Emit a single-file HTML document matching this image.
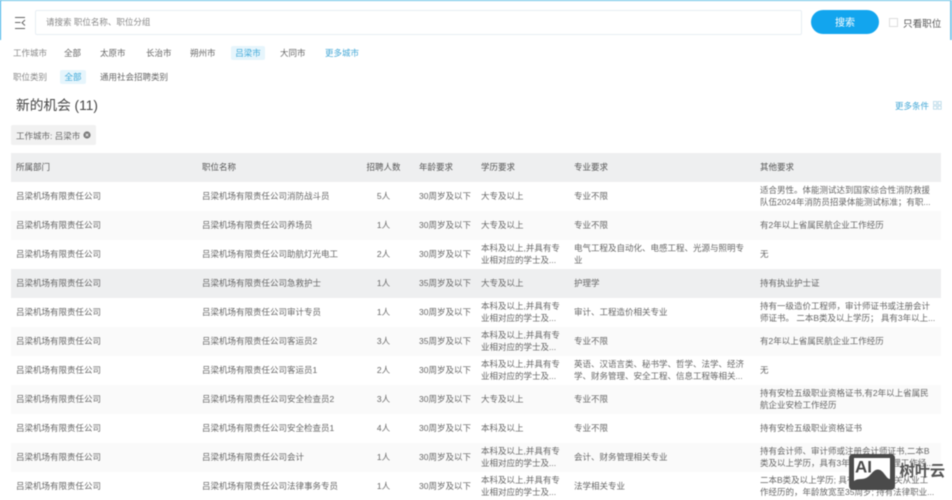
<!DOCTYPE html>
<html lang="zh-CN">
<head>
<meta charset="utf-8">
<title>新的机会</title>
<style>
html,body{margin:0;padding:0;background:#fff}
body{width:952px;height:500px;overflow:hidden;position:relative;font-family:"Liberation Sans","Noto Sans CJK SC",sans-serif;font-size:8.5px;color:#666}
#p{position:absolute;left:0;top:0;width:952px;height:500px;overflow:hidden;filter:blur(.45px)}
.a{position:absolute;white-space:nowrap}
.f{line-height:14px;height:14px}
.chip{background:#e6f5fc;color:#3fa9d8;text-align:center;border-radius:2px}
.row{position:absolute;left:11px;width:930px;height:29px}
.row.s{background:#fafafa}
.row.h{background:#eeeff0}
.row.t{background:#eeeff0;color:#555;height:29px}
.row div{position:absolute;top:0;height:29px;display:flex;align-items:center;white-space:nowrap;line-height:12px}
.c1{left:5px}.c2{left:191px}.c3{left:347px;width:51px;justify-content:center}.c4{left:408px}.c5{left:470px}.c6{left:563px}.c7{left:749px}
</style>
</head>
<body>
<div id="p">
<div class="a" style="left:0;top:0;width:952px;height:1px;background:#6cc3e6"></div>
<div class="a" style="left:0;top:0;width:1px;height:40px;background:#35aee6"></div>
<div class="a" style="left:950px;top:0;width:1.5px;height:40px;background:#7cc6e8"></div>

<svg class="a" style="left:14px;top:16px" width="12" height="14" viewBox="0 0 12 14" fill="none" stroke="#666" stroke-width="1">
<path d="M1 1.500H11M1 6.500H6.500M1 12.500H11M11 4L8 6.800L11 9.500"/>
</svg>

<div class="a" style="left:35px;top:10px;width:765px;height:23px;border:1px solid #e8eef4;border-radius:2px;line-height:23px;text-indent:10px;color:#888">请搜索 职位名称、职位分组</div>
<div class="a" style="left:811px;top:10px;width:68px;height:24px;border-radius:12px;background:#12a5ee"></div>
<div class="a" style="left:811px;top:12px;width:68px;height:24px;color:#fff;text-align:center;line-height:24px;font-size:10px">搜索</div>
<div class="a" style="left:889px;top:18px;width:7px;height:7px;border:1px solid #ddd"></div>
<div class="a" style="left:903px;top:17.500px;line-height:14px;font-size:9.6px;color:#555">只看职位</div>

<div class="a f" style="left:13px;top:46px;color:#888">工作城市</div>
<div class="a f" style="left:64px;top:46px">全部</div>
<div class="a f" style="left:100px;top:46px">太原市</div>
<div class="a f" style="left:146px;top:46px">长治市</div>
<div class="a f" style="left:190px;top:46px">朔州市</div>
<div class="a f chip" style="left:231px;top:46px;width:34px">吕梁市</div>
<div class="a f" style="left:280px;top:46px">大同市</div>
<div class="a f" style="left:325px;top:46px;color:#45a8d6">更多城市</div>

<div class="a f" style="left:13px;top:70px;color:#888">职位类别</div>
<div class="a f chip" style="left:60px;top:70px;width:26px">全部</div>
<div class="a f" style="left:100px;top:70px">通用社会招聘类别</div>

<div class="a" style="left:16px;top:97px;font-size:13.7px;line-height:18px;color:#444">新的机会 (11)</div>
<div class="a" style="left:895px;top:98.500px;line-height:14px;color:#45a8d6">更多条件</div>
<svg class="a" style="left:933px;top:100.500px" width="9" height="9" viewBox="0 0 9 9" fill="none" stroke="#b5d6e6" stroke-width=".8">
<rect x=".5" y=".5" width="3.200" height="3.200"/><rect x="5" y=".5" width="3.200" height="3.200"/><rect x=".5" y="5" width="3.200" height="3.200"/><rect x="5" y="5" width="3.200" height="3.200"/>
</svg>

<div class="a" style="left:11px;top:125px;width:85px;height:20px;background:#f1f1f1;border-radius:2px"></div>
<div class="a" style="left:16px;top:128.500px;line-height:14px;color:#666">工作城市: 吕梁市</div>
<svg class="a" style="left:83px;top:131px" width="8" height="8" viewBox="0 0 8 8">
<circle cx="4" cy="4" r="3.600" fill="#7b7b7b"/><path d="M2.700 2.700L5.300 5.300M5.300 2.700L2.700 5.300" stroke="#f1f1f1" stroke-width=".8"/>
</svg>

<div class="row t" style="top:152.500px">
<div class="c1">所属部门</div><div class="c2">职位名称</div><div class="c3">招聘人数</div><div class="c4">年龄要求</div><div class="c5">学历要求</div><div class="c6">专业要求</div><div class="c7">其他要求</div>
</div>

<div class="row" style="top:181.500px">
<div class="c1">吕梁机场有限责任公司</div><div class="c2">吕梁机场有限责任公司消防战斗员</div><div class="c3">5人</div><div class="c4">30周岁及以下</div><div class="c5">大专及以上</div><div class="c6">专业不限</div><div class="c7"><span>适合男性。体能测试达到国家综合性消防救援<br>队伍2024年消防员招录体能测试标准；有职...</span></div>
</div>
<div class="row s" style="top:210.500px">
<div class="c1">吕梁机场有限责任公司</div><div class="c2">吕梁机场有限责任公司养场员</div><div class="c3">1人</div><div class="c4">30周岁及以下</div><div class="c5">大专及以上</div><div class="c6">专业不限</div><div class="c7">有2年以上省属民航企业工作经历</div>
</div>
<div class="row" style="top:239.500px">
<div class="c1">吕梁机场有限责任公司</div><div class="c2">吕梁机场有限责任公司助航灯光电工</div><div class="c3">2人</div><div class="c4">30周岁及以下</div><div class="c5"><span>本科及以上,并具有专<br>业相对应的学士及...</span></div><div class="c6"><span>电气工程及自动化、电感工程、光源与照明专<br>业</span></div><div class="c7">无</div>
</div>
<div class="row h" style="top:268.500px">
<div class="c1">吕梁机场有限责任公司</div><div class="c2">吕梁机场有限责任公司急救护士</div><div class="c3">1人</div><div class="c4">35周岁及以下</div><div class="c5">大专及以上</div><div class="c6">护理学</div><div class="c7">持有执业护士证</div>
</div>
<div class="row" style="top:297.500px">
<div class="c1">吕梁机场有限责任公司</div><div class="c2">吕梁机场有限责任公司审计专员</div><div class="c3">1人</div><div class="c4">30周岁及以下</div><div class="c5"><span>本科及以上,并具有专<br>业相对应的学士及...</span></div><div class="c6">审计、工程造价相关专业</div><div class="c7"><span>持有一级造价工程师，审计师证书或注册会计<br>师证书。 二本B类及以上学历； 具有3年以上...</span></div>
</div>
<div class="row s" style="top:326.500px">
<div class="c1">吕梁机场有限责任公司</div><div class="c2">吕梁机场有限责任公司客运员2</div><div class="c3">3人</div><div class="c4">35周岁及以下</div><div class="c5"><span>本科及以上,并具有专<br>业相对应的学士及...</span></div><div class="c6">专业不限</div><div class="c7">有2年以上省属民航企业工作经历</div>
</div>
<div class="row" style="top:355.500px">
<div class="c1">吕梁机场有限责任公司</div><div class="c2">吕梁机场有限责任公司客运员1</div><div class="c3">2人</div><div class="c4">30周岁及以下</div><div class="c5"><span>本科及以上,并具有专<br>业相对应的学士及...</span></div><div class="c6"><span>英语、汉语言类、秘书学、哲学、法学、经济<br>学、财务管理、安全工程、信息工程等相关...</span></div><div class="c7">无</div>
</div>
<div class="row s" style="top:384.500px">
<div class="c1">吕梁机场有限责任公司</div><div class="c2">吕梁机场有限责任公司安全检查员2</div><div class="c3">3人</div><div class="c4">30周岁及以下</div><div class="c5">大专及以上</div><div class="c6">专业不限</div><div class="c7"><span>持有安检五级职业资格证书,有2年以上省属民<br>航企业安检工作经历</span></div>
</div>
<div class="row" style="top:413.500px">
<div class="c1">吕梁机场有限责任公司</div><div class="c2">吕梁机场有限责任公司安全检查员1</div><div class="c3">4人</div><div class="c4">30周岁及以下</div><div class="c5">本科及以上</div><div class="c6">专业不限</div><div class="c7">持有安检五级职业资格证书</div>
</div>
<div class="row s" style="top:442.500px">
<div class="c1">吕梁机场有限责任公司</div><div class="c2">吕梁机场有限责任公司会计</div><div class="c3">1人</div><div class="c4">30周岁及以下</div><div class="c5"><span>本科及以上,并具有专<br>业相对应的学士及...</span></div><div class="c6">会计、财务管理相关专业</div><div class="c7"><span>持有会计师、审计师或注册会计师证书,二本B<br>类及以上学历，具有3年以上财务管理工作经...</span></div>
</div>
<div class="row" style="top:471.500px">
<div class="c1">吕梁机场有限责任公司</div><div class="c2">吕梁机场有限责任公司法律事务专员</div><div class="c3">1人</div><div class="c4">30周岁及以下</div><div class="c5"><span>本科及以上,并具有专<br>业相对应的学士及...</span></div><div class="c6">法学相关专业</div><div class="c7"><span>二本B类及以上学历; 具有3年以上相关从业工<br>作经历的，年龄放宽至35周岁; 持有法律职业...</span></div>
</div>

<svg class="a" style="left:849px;top:453px" width="47" height="38" viewBox="0 0 47 38">
<rect x="0" y="1" width="46" height="36" rx="4" fill="#4a4a4a"/>
<path d="M5 5H41V26C37 26 35 17 29 16.500C24 16.500 22 23 17 25C12 27 9 25 5 28Z" fill="#fff"/>
<text x="6" y="19.500" font-family="Liberation Sans,sans-serif" font-weight="700" font-size="17" fill="#4a4a4a">AI</text>
</svg>
<div class="a" style="left:899.500px;top:462px;font-size:15.200px;font-weight:700;line-height:20px;color:#555">树叶云</div>
</div>
</body>
</html>
